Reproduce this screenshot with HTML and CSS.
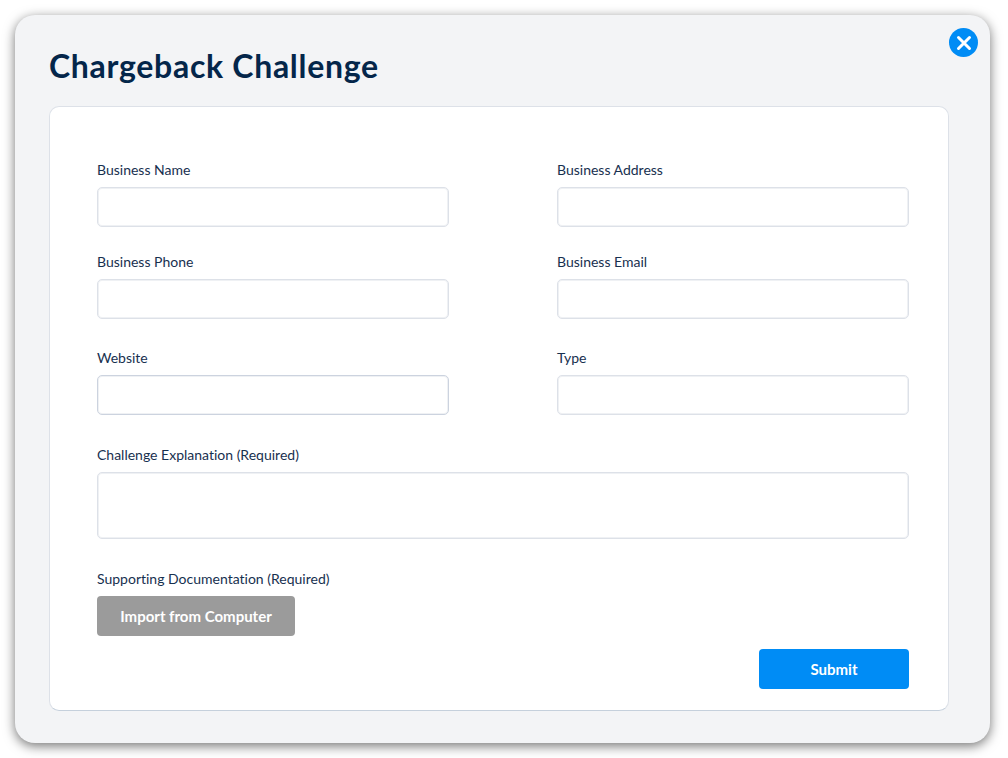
FILE: index.html
```html
<!DOCTYPE html>
<html>
<head>
  <title>Chargeback Challenge</title>
  <link rel="stylesheet" href="styles.css">
</head>
<body>
  <div class="modal">
    <button class="close" aria-label="Close">
      <svg width="16" height="16" viewBox="0 0 16 16"><path d="M2.5 2.5l11 11M13.5 2.5l-11 11" fill="none" stroke="#fff" stroke-width="3" stroke-linecap="round"/></svg>
    </button>
    <h1 class="title">Chargeback Challenge</h1>
    <div class="card">
      <div class="row">
        <div class="field"><label>Business Name</label><input type="text"></div>
        <div class="field"><label>Business Address</label><input type="text"></div>
      </div>
      <div class="row row-tall">
        <div class="field"><label>Business Phone</label><input type="text"></div>
        <div class="field"><label>Business Email</label><input type="text"></div>
      </div>
      <div class="row row-last">
        <div class="field"><label>Website</label><input type="text" class="input-dark"></div>
        <div class="field"><label>Type</label><input type="text"></div>
      </div>
      <div class="field explain">
        <label>Challenge Explanation (Required)</label>
        <textarea></textarea>
      </div>
      <div class="field docs">
        <label>Supporting Documentation (Required)</label>
        <button class="btn btn-import">Import from Computer</button>
      </div>
      <div class="actions">
        <button class="btn btn-submit">Submit</button>
      </div>
    </div>
  </div>
</body>
</html>
```

FILE: styles.css
```css
* {
  box-sizing: border-box;
}
body {
  margin: 0;
  height: 758px;
  overflow: hidden;
  background-color: #fff;
  font-family: Lato, "Open Sans", sans-serif;
  font-variant-ligatures: none;
  color: #0b2545;
}
.modal {
  position: relative;
  width: 975px;
  height: 728px;
  margin: 15px 0 0 15px;
  padding: 34px 41px 0 34px;
  background-color: #f3f4f6;
  border-radius: 20px;
  box-shadow: 0 3px 12px rgba(0,0,0,0.55);
}
.close {
  position: absolute;
  top: 13px;
  right: 12px;
  width: 29px;
  height: 29px;
  padding: 0;
  border: none;
  border-radius: 50%;
  background-color: #008cf5;
  display: flex;
  align-items: center;
  justify-content: center;
}
.title {
  margin: 0;
  height: 57px;
  font-size: 32px;
  line-height: 34px;
  font-weight: 700;
  letter-spacing: 0.7px;
  color: #04264a;
}
.card {
  height: 605px;
  padding: 55px 39px 0 47px;
  background-color: #fff;
  border: 1px solid #dde1e8;
  border-bottom-color: #c5d0dc;
  border-radius: 10px;
}
.row {
  display: flex;
  justify-content: space-between;
  margin-bottom: 27px;
}
.row-tall {
  margin-bottom: 31px;
}
.row-last {
  margin-bottom: 32px;
}
.field {
  display: flex;
  flex-direction: column;
  align-items: flex-start;
  width: 352px;
}
.field label {
  height: 25px;
  font-size: 14px;
  line-height: 15px;
  color: #17304f;
}
.field input,
.field textarea {
  display: block;
  width: 100%;
  height: 40px;
  background-color: #fff;
  border: 1px solid #dde1e8;
  box-shadow: inset 0 0 0 1px #eff1f4;
  border-radius: 5px;
  resize: none;
}
.field .input-dark {
  border-color: #ccd3df;
}
.explain {
  width: 812px;
  margin-bottom: 32px;
}
.explain textarea {
  height: 67px;
}
.btn {
  height: 40px;
  border: none;
  border-radius: 4px;
  font-family: Lato, "Open Sans", sans-serif;
  font-size: 15px;
  font-weight: 700;
  color: #fff;
}
.btn-import {
  width: 198px;
  background-color: #9b9b9b;
}
.btn-submit {
  width: 150px;
  background-color: #008cf5;
}
.actions {
  display: flex;
  justify-content: flex-end;
  margin-top: 13px;
}
```
